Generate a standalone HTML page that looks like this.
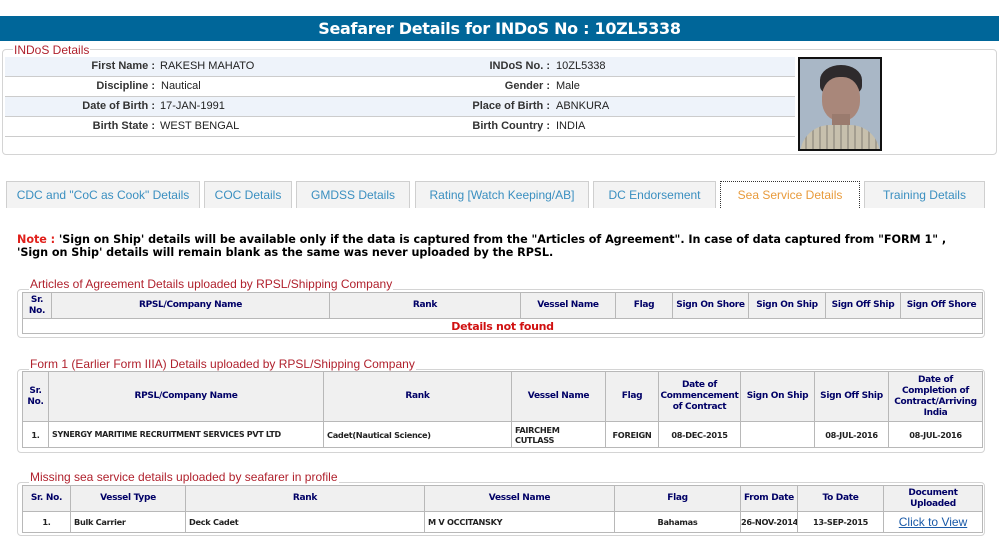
<!DOCTYPE html>
<html><head><meta charset="utf-8">
<style>
*{box-sizing:border-box;margin:0;padding:0}
body{width:999px;height:541px;background:#fff;position:relative;overflow:hidden;font-family:"Liberation Sans",Arial,sans-serif}
.abs{position:absolute}
.hdr{left:0;top:16px;width:999px;height:25px;background:#006699;color:#fff;font:bold 16px "DejaVu Sans",Verdana,sans-serif;text-align:center;line-height:25px;letter-spacing:-0.3px}
.fs{border:1px solid #d4d4d4;border-radius:4px}
.lg{background:#fff;color:#b0212d;font-size:12px;padding:0 1px;line-height:12px}
.row{position:absolute;left:5px;width:790px;height:20px;border-bottom:1px solid #ccc;font-size:11px;color:#222;line-height:19px}
.row.a{background:#eef3fa}
.row span{position:absolute}
.row span.k{font-weight:bold;color:#333}
.tab{position:absolute;top:181px;height:27px;background:#f3f3f3;border:1px solid #cfcfcf;border-bottom:none;color:#3a8fc0;font-size:12px;text-align:center;line-height:27px}
.tab.act{background:#fff;border:1px dotted #333;border-bottom:none;color:#e89b3c}
.note{left:17px;top:234px;font:bold 11.2px "DejaVu Sans",Verdana,sans-serif;color:#000;line-height:12.5px;white-space:nowrap;letter-spacing:-0.05px}
table{position:absolute;border-collapse:collapse;table-layout:fixed}
td,th{border:1px solid #b8b8b8;font:bold 9px "DejaVu Sans",Verdana,sans-serif;padding:0 1px;letter-spacing:-0.3px;overflow:hidden}
th{background:#f0f0f0;color:#000066;text-align:center;line-height:11px}
td{color:#222;font-size:8.2px;background:#fff;padding:0 3px}
</style></head><body>
<div class="abs hdr">Seafarer Details for INDoS No : 10ZL5338</div>

<div class="abs fs" style="left:2px;top:49px;width:995px;height:106px"></div>
<div class="abs lg" style="left:13px;top:44px">INDoS Details</div>
<div class="row a" style="top:57px"><span class="k" style="right:640px">First Name :</span><span style="left:155px">RAKESH MAHATO</span><span class="k" style="right:245px">INDoS No. :</span><span style="left:551px">10ZL5338</span></div>
<div class="row" style="top:77px"><span class="k" style="right:640px">Discipline :</span><span style="left:156px">Nautical</span><span class="k" style="right:245px">Gender :</span><span style="left:551px">Male</span></div>
<div class="row a" style="top:97px"><span class="k" style="right:640px">Date of Birth :</span><span style="left:155px">17-JAN-1991</span><span class="k" style="right:245px">Place of Birth :</span><span style="left:551px">ABNKURA</span></div>
<div class="row" style="top:117px"><span class="k" style="right:640px">Birth State :</span><span style="left:155px">WEST BENGAL</span><span class="k" style="right:245px">Birth Country :</span><span style="left:551px">INDIA</span></div>
<div class="abs" style="left:798px;top:57px;width:84px;height:94px;border:2px solid #111;background:#a9b7c6;overflow:hidden">
<div class="abs" style="left:20px;top:6px;width:42px;height:30px;border-radius:50% 50% 30% 30%;background:#2e2a2c"></div>
<div class="abs" style="left:22px;top:18px;width:38px;height:44px;border-radius:45%;background:#a9877a"></div>
<div class="abs" style="left:32px;top:55px;width:18px;height:16px;background:#9a7b6e"></div>
<div class="abs" style="left:0;top:66px;width:80px;height:30px;border-radius:30px 30px 0 0;background:repeating-linear-gradient(90deg,#c7c0ad 0 5px,#a49e90 5px 7px),#bbb"></div>
</div>

<div class="tab" style="left:6px;width:194px">CDC and "CoC as Cook" Details</div>
<div class="tab" style="left:204px;width:88px">COC Details</div>
<div class="tab" style="left:296px;width:114px">GMDSS Details</div>
<div class="tab" style="left:415px;width:174px">Rating [Watch Keeping/AB]</div>
<div class="tab" style="left:593px;width:123px">DC Endorsement</div>
<div class="tab act" style="left:720px;width:140px">Sea Service Details</div>
<div class="tab" style="left:864px;width:121px">Training Details</div>

<div class="abs note"><span style="color:#e0201b">Note : </span>'Sign on Ship' details will be available only if the data is captured from the "Articles of Agreement". In case of data captured from "FORM 1" ,<br>'Sign on Ship' details will remain blank as the same was never uploaded by the RPSL.</div>

<div class="abs fs" style="left:17px;top:289px;width:968px;height:49px"></div>
<div class="abs lg" style="left:29px;top:278px">Articles of Agreement Details uploaded by RPSL/Shipping Company</div>
<table style="left:22px;top:292px;width:960px">
<colgroup><col style="width:29px"><col style="width:278px"><col style="width:191px"><col style="width:95px"><col style="width:57px"><col style="width:76px"><col style="width:77px"><col style="width:75px"><col style="width:82px"></colgroup>
<tr style="height:26px"><th>Sr.<br>No.</th><th>RPSL/Company Name</th><th>Rank</th><th>Vessel Name</th><th>Flag</th><th style="white-space:nowrap">Sign On Shore</th><th style="white-space:nowrap">Sign On Ship</th><th style="white-space:nowrap">Sign Off Ship</th><th style="white-space:nowrap">Sign Off Shore</th></tr>
<tr style="height:15px"><td colspan="9" style="text-align:center;color:#d01010;font-size:11px;line-height:13px">Details not found</td></tr>
</table>

<div class="abs fs" style="left:17px;top:369px;width:968px;height:84px"></div>
<div class="abs lg" style="left:29px;top:358px">Form 1 (Earlier Form IIIA) Details uploaded by RPSL/Shipping Company</div>
<table style="left:22px;top:371px;width:960px">
<colgroup><col style="width:26px"><col style="width:275px"><col style="width:188px"><col style="width:94px"><col style="width:53px"><col style="width:82px"><col style="width:74px"><col style="width:74px"><col style="width:94px"></colgroup>
<tr style="height:50px"><th>Sr.<br>No.</th><th>RPSL/Company Name</th><th>Rank</th><th>Vessel Name</th><th>Flag</th><th>Date of Commencement of Contract</th><th style="white-space:nowrap">Sign On Ship</th><th style="white-space:nowrap">Sign Off Ship</th><th>Date of Completion of Contract/Arriving India</th></tr>
<tr style="height:26px"><td style="text-align:center">1.</td><td style="font-size:8px">SYNERGY MARITIME RECRUITMENT SERVICES PVT LTD</td><td>Cadet(Nautical Science)</td><td style="line-height:10px">FAIRCHEM<br>CUTLASS</td><td style="text-align:center">FOREIGN</td><td style="text-align:center">08-DEC-2015</td><td></td><td style="text-align:center">08-JUL-2016</td><td style="text-align:center">08-JUL-2016</td></tr>
</table>

<div class="abs fs" style="left:17px;top:482px;width:968px;height:54px"></div>
<div class="abs lg" style="left:29px;top:471px">Missing sea service details uploaded by seafarer in profile</div>
<table style="left:22px;top:485px;width:960px">
<colgroup><col style="width:48px"><col style="width:115px"><col style="width:239px"><col style="width:190px"><col style="width:126px"><col style="width:57px"><col style="width:86px"><col style="width:99px"></colgroup>
<tr style="height:26px"><th>Sr. No.</th><th>Vessel Type</th><th>Rank</th><th>Vessel Name</th><th>Flag</th><th style="white-space:nowrap">From Date</th><th>To Date</th><th>Document Uploaded</th></tr>
<tr style="height:21px"><td style="text-align:center">1.</td><td>Bulk Carrier</td><td>Deck Cadet</td><td>M V OCCITANSKY</td><td style="text-align:center">Bahamas</td><td style="text-align:center;white-space:nowrap;padding:0">26-NOV-2014</td><td style="text-align:center">13-SEP-2015</td><td style="text-align:center;font:12px 'Liberation Sans',Arial,sans-serif;color:#1a5aa8;text-decoration:underline;letter-spacing:0">Click to View</td></tr>
</table>
</body></html>
